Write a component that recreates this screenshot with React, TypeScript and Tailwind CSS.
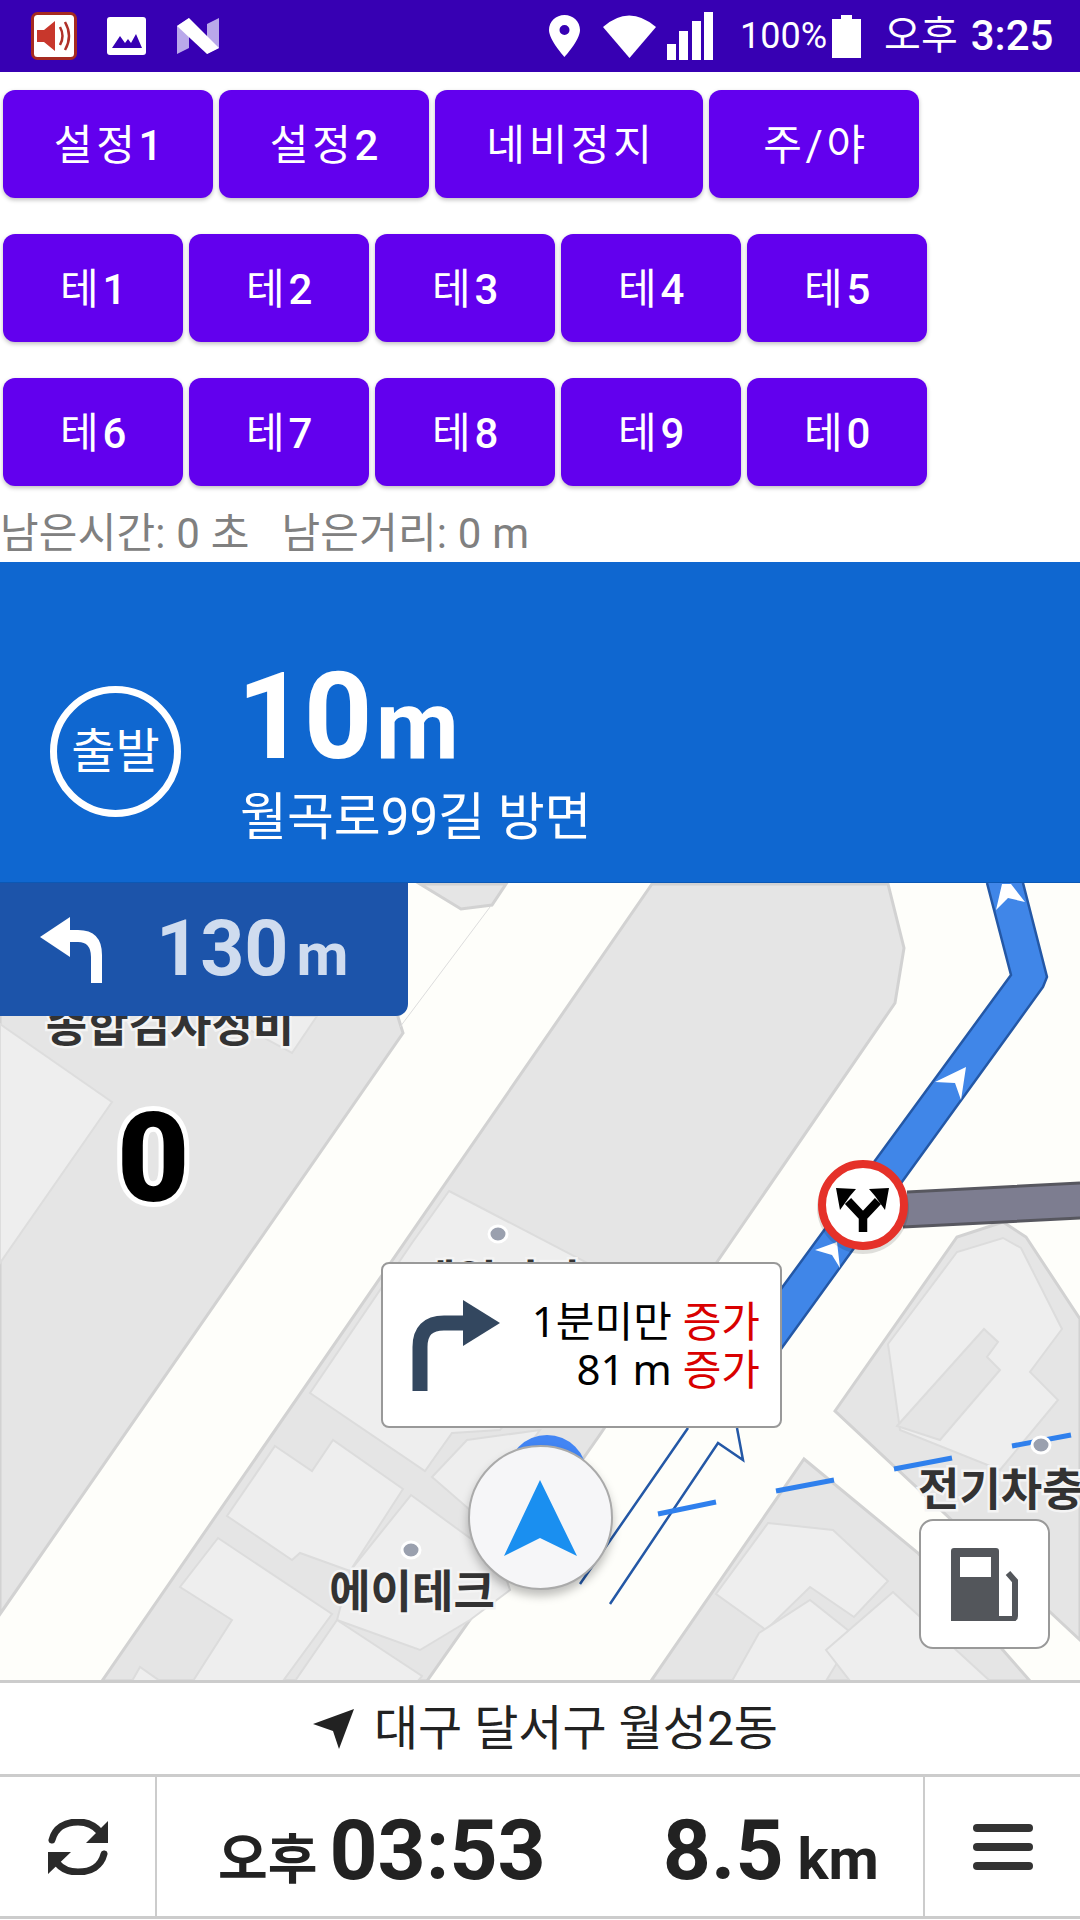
import type { ReactNode } from "react";

const topButtons = [
  { label: "설정", digit: "1", width: "w-[210px]" },
  { label: "설정", digit: "2", width: "w-[210px]" },
  { label: "네비정지", digit: "", width: "w-[268px]" },
  { label: "주/야", digit: "", width: "w-[210px]" },
];

const themeRows = [
  ["1", "2", "3", "4", "5"],
  ["6", "7", "8", "9", "0"],
];

function NavButton({ label, digit, width }: { label: string; digit: string; width: string }) {
  return (
    <button className={`${width} flex h-[108px] items-center justify-center rounded-[12px] bg-[#6200ee] pl-[4px] pt-[2px] text-[42px] tracking-[3.7px] text-white shadow-[0_2px_4px_rgba(0,0,0,0.25)]`}>
      <span>{label}</span>
      <span className="font-medium">{digit}</span>
    </button>
  );
}

function Row({ className, children }: { className: string; children: ReactNode }) {
  return <div className={`flex gap-[6px] pl-[3px] ${className}`}>{children}</div>;
}

function StatusBar() {
  return (
    <div className="flex h-[72px] items-center bg-[#3700b3] text-white">
      <svg viewBox="0 0 46 48" className="ml-[31px] h-[48px] w-[46px]">
        <rect x="1.5" y="1.5" width="43" height="45" rx="5" fill="#fff" stroke="#a52a20" strokeWidth="3" />
        <path d="M6 18h7l11-9v30l-11-9H6z" fill="#c8372c" />
        <path d="M29 15q5 9 0 18M34 10q8 14 0 28" fill="none" stroke="#b03028" strokeWidth="2.5" />
      </svg>
      <svg viewBox="0 0 39 38" className="ml-[30px] h-[38px] w-[39px]">
        <rect width="39" height="38" rx="3" fill="#fff" />
        <path d="M5 31l8-12 5 7 3-4 3 4 5-9 6 14z" fill="#3700b3" />
      </svg>
      <svg viewBox="0 0 42 36" className="ml-[31px] h-[36px] w-[42px]">
        <path d="M0 8l12-8v30L0 36z" fill="#b9a8ea" />
        <path d="M30 6l12-6v30l-12 6z" fill="#b9a8ea" />
        <path d="M0 8L12 0l30 30-12 6z" fill="#fff" />
      </svg>
      <svg viewBox="0 0 31 42" className="ml-[330px] h-[42px] w-[31px]">
        <path fillRule="evenodd" d="M15.500 0C7 0 0 6.500 0 15c0 10 15.500 27 15.500 27S31 25 31 15C31 6.500 24 0 15.500 0zm0 10a5 5 0 1 1 0 10 5 5 0 0 1 0-10z" fill="#fff" />
      </svg>
      <svg viewBox="0 0 53 43" className="ml-[23px] h-[43px] w-[53px]">
        <path d="M0 12Q26-11 53 12L26.500 43z" fill="#fff" />
      </svg>
      <svg viewBox="0 0 46 48" className="ml-[11px] h-[48px] w-[46px]">
        <rect x="0" y="32" width="9" height="16" fill="#fff" />
        <rect x="12" y="19" width="9" height="29" fill="#fff" />
        <rect x="25" y="9" width="9" height="39" fill="#fff" />
        <rect x="37" y="0" width="9" height="48" fill="#fff" />
      </svg>
      <span className="ml-[27px] text-[36px] leading-none">100%</span>
      <svg viewBox="0 0 29 43" className="ml-[5px] h-[43px] w-[29px]">
        <path d="M9 0h11v4h9v39H0V4h9z" fill="#fff" />
      </svg>
      <span className="ml-[23px] text-[40px] leading-none">오후</span>
      <span className="ml-[13px] text-[42px] font-medium leading-none">3:25</span>
    </div>
  );
}

function MapDrawing() {
  return (
    <svg viewBox="0 883 1080 797" className="absolute inset-0 h-full w-full">
      <rect x="0" y="883" width="1080" height="797" fill="#fefefa" />

      {/* left block */}
      <path d="M0 883H398V1017L403 1033L0 1614z" fill="#e5e5e5" stroke="#d2d2d2" strokeWidth="3" />
      <path d="M0 1024L112 1102L0 1263z" fill="#eeeeee" stroke="#dddddd" strokeWidth="2" />
      <path d="M230 1016H317L292 1053L235 1022z" fill="#eeeeee" stroke="#dddddd" strokeWidth="2" />
      <path d="M420 884L461 909L492 905L506 884z" fill="#e5e5e5" stroke="#d2d2d2" strokeWidth="3" />
      <path d="M490 907L400 1027" stroke="#dcdcdc" strokeWidth="1" fill="none" />

      {/* big middle block and the cluster below it */}
      <path d="M652 884H888L904 948L895 1003L717 1262L599 1436L427 1681H102z" fill="#e5e5e5" stroke="#d2d2d2" strokeWidth="3" />
      <g fill="#eeeeee" stroke="#dcdcdc" strokeWidth="2">
        <path d="M449 1191L620 1280L500 1430L452 1433L425 1471L310 1393L412 1243z" />
        <path d="M275 1446L312 1471L333 1440L403 1489L350 1571L300 1553L292 1560L227 1516z" />
        <path d="M411 1495L500 1560L510 1590L470 1620L420 1650L337 1620L350 1571z" />
        <path d="M218 1538L332 1614L283 1681H193L232 1620L180 1587z" />
        <path d="M337 1620L422 1676L418 1681H295z" />
        <path d="M432 1477L467 1440L540 1430L495 1490L470 1510z" />
        <path d="M132 1681L140 1667L160 1681z" />
      </g>

      {/* right blocks */}
      <path d="M835 1411L957 1237L1003 1222L1026 1237L1080 1319V1640z" fill="#e5e5e5" stroke="#d2d2d2" strokeWidth="3" />
      <path d="M888 1344L957 1252L1003 1238L1021 1248L1062 1329L1030 1372L1058 1400L1000 1470L900 1430z" fill="#eeeeee" stroke="#dcdcdc" strokeWidth="2" />
      <path d="M897 1426L984 1329L998 1342L987 1357L1000 1370L940 1440z" fill="#e5e5e5" stroke="#dcdcdc" strokeWidth="2" />
      <path d="M804 1459L918 1553L1030 1681H651z" fill="#e5e5e5" stroke="#d2d2d2" strokeWidth="3" />
      <g fill="#eeeeee" stroke="#dcdcdc" strokeWidth="2">
        <path d="M768 1523L833 1530L888 1581L854 1617L810 1587L766 1630L716 1594z" />
        <path d="M759 1633L810 1600L854 1635L826 1681H732z" />
        <path d="M826 1650L893 1592L990 1681H850z" />
      </g>

      {/* gray closed road */}
      <path d="M907 1192L1080 1183V1218L903 1227z" fill="#7d7d90" />
      <path d="M907 1192L1080 1183M903 1227L1080 1218" stroke="#57575f" strokeWidth="3" fill="none" />

      {/* route */}
      <path d="M987 883L1011 975L740 1345L781 1349L1043 987L1047 977L1023 883z" fill="#4086e8" />
      <path d="M987 883L1011 975L740 1345M1023 883L1047 977L1043 987L781 1349" stroke="#2458a6" strokeWidth="2.500" fill="none" />
      <path d="M688 1428L580 1584M737 1428L743 1460L718 1443L610 1604" stroke="#2458a6" strokeWidth="2.500" fill="none" />
      <path d="M996 910L1002 884H1011L1025 902L1008 898z" fill="#fff" />
      <path d="M935 1082L966 1067L961 1100L955 1083z" fill="#fff" />
      <path d="M815 1250L837 1242L840 1268L832 1255z" fill="#fff" />

      {/* dashes */}
      <path d="M658 1514L716 1502M776 1491L834 1480M894 1469L952 1458M1012 1446L1071 1435" stroke="#2f80ed" strokeWidth="5" fill="none" />

      {/* poi dots */}
      <g fill="#9aa0ae" stroke="#fff" strokeWidth="3">
        <ellipse cx="498" cy="1234" rx="9" ry="8" />
        <ellipse cx="411" cy="1550" rx="9" ry="8" />
        <ellipse cx="1041" cy="1445" rx="9" ry="8" />
      </g>

      {/* labels */}
      <g fontSize="45" fontWeight="700" fill="#333" stroke="#f4f4f4" strokeWidth="5" paintOrder="stroke" textAnchor="middle">
        <text x="170" y="1042">종합검사정비</text>
        <text x="497" y="1298">제일기전</text>
        <text x="412" y="1608">에이테크</text>
        <text x="918" y="1506" textAnchor="start">전기차충</text>
      </g>

      {/* closed road sign */}
      <circle cx="863" cy="1208" r="46" fill="#000" opacity="0.12" />
      <circle cx="863" cy="1205" r="41" fill="#fff" stroke="#e53129" strokeWidth="8" />
      <path d="M836 1188L856 1189L850 1196L840 1210zM889 1188L869 1189L875 1196L885 1210z" fill="#000" />
      <path d="M848 1201L863 1217L878 1201M863 1215V1232" stroke="#000" strokeWidth="8.500" fill="none" />

      {/* current position dot under the puck */}
      <circle cx="547" cy="1475" r="40" fill="#4285f4" />
    </svg>
  );
}

function MapArea() {
  return (
    <div className="relative h-[797px] overflow-hidden">
      <MapDrawing />

      {/* next turn */}
      <div className="absolute left-0 top-0 flex h-[133px] w-[408px] items-center rounded-br-[12px] bg-[#1c54aa]">
        <svg viewBox="0 0 64 66" className="ml-[40px] h-[66px] w-[64px]">
          <path d="M0 20L30 0V13H38Q62 13 62 38V66H51V40Q51 25 38 25H30V40z" fill="#fff" />
        </svg>
        <span className="ml-[52px] flex items-baseline font-bold text-[#cfdcef]">
          <span className="text-[77px] leading-none">130</span>
          <span className="ml-[8px] text-[60px] leading-none">m</span>
        </span>
      </div>

      {/* speed */}
      <span className="absolute left-[117px] top-[195px] text-[125px] font-black leading-[1.3] text-black [-webkit-text-stroke:10px_white] [paint-order:stroke]">
        0
      </span>

      {/* reroute callout */}
      <div className="absolute left-[381px] top-[379px] flex h-[166px] w-[401px] items-center rounded-[8px] border-2 border-[#999] bg-white">
        <svg viewBox="0 0 90 92" className="ml-[29px] h-[92px] w-[90px]">
          <path d="M8 92V48Q8 24 32 24H54" fill="none" stroke="#33475f" strokeWidth="15" />
          <path d="M51 1L88 24L51 47z" fill="#33475f" />
        </svg>
        <div className="ml-auto mr-[20px] text-right font-['Noto_Sans','Noto_Sans_CJK_KR',sans-serif] text-[42px] leading-[48px] text-black">
          <div>
            1분미만 <span className="text-[#d90000]">증가</span>
          </div>
          <div>
            <span className="[word-spacing:-3px]">81 m</span> <span className="text-[#d90000]">증가</span>
          </div>
        </div>
      </div>

      {/* position puck */}
      <div className="absolute left-[468px] top-[562px] flex h-[145px] w-[145px] items-center justify-center rounded-full border-2 border-[#aaa] bg-[#f6f6f8] shadow-[0_6px_10px_rgba(0,0,0,0.25)]">
        <svg viewBox="0 0 73 76" className="h-[76px] w-[73px]">
          <path d="M36 0L73 76L36 58L0 76z" fill="#1a8ff0" />
        </svg>
      </div>

      {/* gas stations */}
      <div className="absolute left-[919px] top-[636px] flex h-[130px] w-[131px] items-center justify-center rounded-[14px] border-2 border-[#999] bg-white">
        <svg viewBox="0 0 67 73" className="h-[73px] w-[67px]">
          <path fillRule="evenodd" d="M3 0H45Q48 0 48 3V73H0V3Q0 0 3 0zM9 9V29H40V9z" fill="#53565b" />
          <path d="M57 25L64 33V68Q64 71 60 71H48" fill="none" stroke="#53565b" strokeWidth="6" />
        </svg>
      </div>
    </div>
  );
}

export default function App() {
  return (
    <div className="flex h-[1920px] w-[1080px] flex-col overflow-hidden bg-white font-[Roboto,'Noto_Sans_CJK_KR',sans-serif]">
      <StatusBar />

      <Row className="mt-[18px]">
        {topButtons.map((b) => (
          <NavButton key={b.label + b.digit} label={b.label} digit={b.digit} width={b.width} />
        ))}
      </Row>
      {themeRows.map((row) => (
        <Row key={row[0]} className="mt-[36px]">
          {row.map((digit) => (
            <NavButton key={digit} label="테" digit={digit} width="w-[180px]" />
          ))}
        </Row>
      ))}

      <div className="flex h-[76px] items-center whitespace-pre pt-[20px] text-[42px] leading-none tracking-[0.2px] text-[#808080]">
        남은시간: 0 초{"   "}남은거리: 0 m
      </div>

      <div className="flex h-[321px] items-start border-b border-[#0b58b5] bg-[#0f67d0] text-white">
        <div className="ml-[50px] mt-[124px] flex h-[131px] w-[131px] items-center justify-center rounded-full border-[7px] border-white text-[48px]">
          출발
        </div>
        <div className="ml-[56px] mt-[95px]">
          <div className="flex items-baseline font-bold leading-none">
            <span className="text-[120px] tracking-[-2px]">10</span>
            <span className="ml-[5px] text-[96px]">m</span>
          </div>
          <div className="ml-[3px] mt-[15px] text-[51px] leading-none">월곡로99길 방면</div>
        </div>
      </div>

      <MapArea />

      <div className="flex h-[97px] items-center justify-center gap-[20px] border-y-[3px] border-[#cccccc] pl-[11px] text-[48px] text-[#222]">
        <svg viewBox="0 0 41 40" className="h-[40px] w-[41px]">
          <path d="M41 0L0 15L20 22L26 40z" fill="#222" />
        </svg>
        대구 달서구 월성2동
      </div>

      <div className="flex h-[142px] items-stretch border-b-[3px] border-[#cccccc] text-[#222]">
        <div className="flex w-[157px] items-center justify-center border-r-2 border-[#cccccc]">
          <svg viewBox="0 0 60 56" className="h-[56px] w-[60px]">
            <path d="M4 21C7 9 17 3 30 3C39 3 46 6 52 13M56 35C53 47 43 53 30 53C21 53 14 50 9 44" fill="none" stroke="#2a2a2a" strokeWidth="7" strokeLinecap="round" />
            <path d="M60 2V24H38zM0 33H23L0 55z" fill="#2a2a2a" />
          </svg>
        </div>
        <div className="flex flex-1 items-baseline pt-[32px] font-bold">
          <span className="ml-[61px] text-[54px] leading-none">오후</span>
          <span className="ml-[12px] text-[84px] leading-none">03:53</span>
          <span className="ml-[117px] text-[84px] leading-none">8.5</span>
          <span className="ml-[14px] text-[58px] leading-none">km</span>
        </div>
        <div className="flex w-[157px] flex-col items-center justify-center gap-[11px] border-l-2 border-[#cccccc]">
          <div className="h-[8px] w-[60px] rounded-full bg-[#333]" />
          <div className="h-[8px] w-[60px] rounded-full bg-[#333]" />
          <div className="h-[8px] w-[60px] rounded-full bg-[#333]" />
        </div>
      </div>
    </div>
  );
}
